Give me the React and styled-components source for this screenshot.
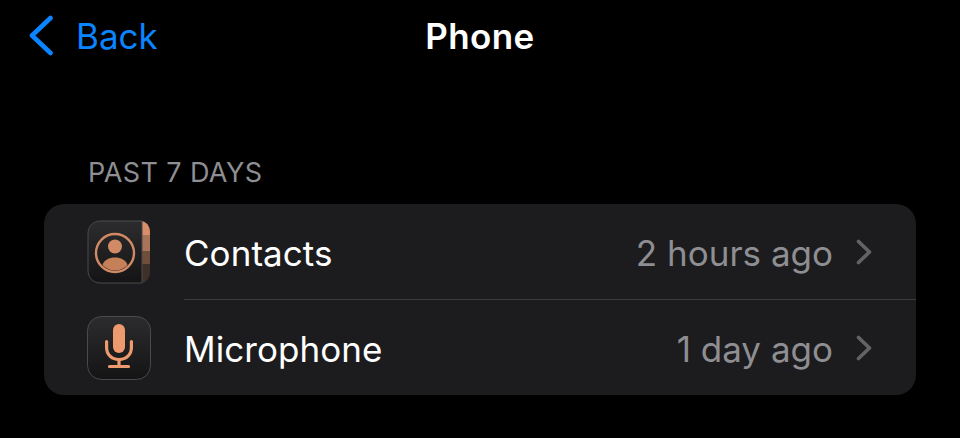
import styled, { createGlobalStyle } from "styled-components";

const GlobalStyle = createGlobalStyle`
  html, body {
    margin: 0;
    padding: 0;
    background: #000;
  }
  body {
    font-family: Inter, "Liberation Sans", sans-serif;
    overflow: hidden;
  }
`;

const Page = styled.div`
  width: 960px;
  height: 438px;
  background: #000;
  color: #fff;
  overflow: hidden;
`;

const NavBar = styled.header`
  display: grid;
  grid-template-columns: 1fr auto 1fr;
  align-items: center;
  height: 72px;
  padding: 0 28px;
`;

const BackLink = styled.a`
  display: flex;
  align-items: center;
  gap: 22px;
  color: #0a84ff;
  font-size: 35px;
  letter-spacing: 0;
`;

const Title = styled.h1`
  margin: 0;
  font-size: 35px;
  font-weight: 600;
  letter-spacing: 0.4px;
  color: #fff;
`;

const SectionLabel = styled.h2`
  margin: 85px 0 0;
  padding-left: 88px;
  height: 32px;
  line-height: 32px;
  font-size: 27px;
  font-weight: 400;
  letter-spacing: 0.4px;
  color: #8e8e93;
`;

const Card = styled.section`
  margin: 15px 44px 0;
  background: #1c1c1e;
  border-radius: 20px;
  overflow: hidden;
`;

const Row = styled.div`
  display: flex;
  align-items: center;
  height: ${({ $divided }) => ($divided ? "96px" : "95px")};
  padding-left: 43px;
`;

const IconTile = styled.div`
  flex: none;
  width: 64px;
  height: 64px;
  margin-top: ${({ $divided }) => ($divided ? "1px" : "0")};
`;

const RowBody = styled.div`
  flex: 1;
  display: flex;
  align-items: center;
  align-self: stretch;
  margin-left: 33px;
  padding: 2px 44px 0 0;
  border-top: ${({ $divided }) => ($divided ? "1px solid #3a3a3c" : "none")};
`;

const RowTitle = styled.span`
  flex: 1;
  font-size: 35px;
  letter-spacing: 0.05px;
  color: #fff;
`;

const RowValue = styled.span`
  font-size: 35px;
  letter-spacing: 0;
  color: #8e8e93;
`;

const Chevron = styled.svg`
  flex: none;
  margin: -2px 0 0 23px;
  width: 16px;
  height: 26px;
`;

function ContactsIcon() {
  return (
    <svg width="64" height="64" viewBox="0 0 64 64">
      <defs>
        <linearGradient id="tileA" x1="0" y1="0" x2="0" y2="1">
          <stop offset="0" stopColor="#2c2c2e" />
          <stop offset="1" stopColor="#141415" />
        </linearGradient>
      </defs>
      <path d="M50 1h4c5 0 9 5 9 11v8H50z" fill="#d88e68" />
      <rect x="50" y="15" width="13" height="16" fill="#a9745a" />
      <rect x="50" y="31" width="13" height="13" fill="#6f4f3c" />
      <path d="M50 44h13v8c0 6-4 11-9 11h-4z" fill="#3f3029" />
      <path d="M1 14C1 6 6 1 14 1h41v62H14C6 63 1 58 1 50z" fill="url(#tileA)" stroke="#4a4a4c" strokeWidth="1" />
      <circle cx="28" cy="33" r="19" fill="none" stroke="#d08a65" strokeWidth="2.4" />
      <circle cx="28" cy="26.500" r="7" fill="#d08a65" />
      <path d="M15.500 45c1.500-5 6.500-7.500 12.500-7.500s11 2.500 12.500 7.500c-3 3.500-7.500 5.500-12.500 5.500s-9.500-2-12.500-5.500z" fill="#c58059" />
    </svg>
  );
}

function MicIcon() {
  return (
    <svg width="64" height="64" viewBox="0 0 64 64">
      <defs>
        <linearGradient id="tileB" x1="0" y1="0" x2="0" y2="1">
          <stop offset="0" stopColor="#2c2c2e" />
          <stop offset="1" stopColor="#141415" />
        </linearGradient>
      </defs>
      <rect x="0.500" y="0.500" width="63" height="63" rx="14" fill="url(#tileB)" stroke="#4a4a4c" />
      <rect x="26" y="8" width="12" height="29" rx="6" fill="#ee9a6e" />
      <path d="M19.600 25.500v6c0 7 5 12 12.400 12s12.400-5 12.400-12v-6" fill="none" stroke="#ee9a6e" strokeWidth="3.200" strokeLinecap="round" />
      <path d="M32 44v6M22.500 50.500h19" fill="none" stroke="#ee9a6e" strokeWidth="3.200" strokeLinecap="round" />
    </svg>
  );
}

function RowChevron() {
  return (
    <Chevron viewBox="0 0 16 26">
      <path d="M2.500 2.500 13.500 13 2.500 23.500" fill="none" stroke="#636366" strokeWidth="3.600" strokeLinecap="round" strokeLinejoin="round" />
    </Chevron>
  );
}

export default function App() {
  return (
    <Page>
      <GlobalStyle />
      <NavBar>
        <BackLink>
          <svg width="26" height="42" viewBox="0 0 26 42">
            <path d="M22.500 3 4 20.500 22.500 38" fill="none" stroke="#0a84ff" strokeWidth="4.600" strokeLinecap="round" strokeLinejoin="round" />
          </svg>
          Back
        </BackLink>
        <Title>Phone</Title>
      </NavBar>
      <SectionLabel>PAST 7 DAYS</SectionLabel>
      <Card>
        <Row>
          <IconTile><ContactsIcon /></IconTile>
          <RowBody>
            <RowTitle>Contacts</RowTitle>
            <RowValue>2 hours ago</RowValue>
            <RowChevron />
          </RowBody>
        </Row>
        <Row $divided>
          <IconTile $divided><MicIcon /></IconTile>
          <RowBody $divided>
            <RowTitle>Microphone</RowTitle>
            <RowValue>1 day ago</RowValue>
            <RowChevron />
          </RowBody>
        </Row>
      </Card>
    </Page>
  );
}
